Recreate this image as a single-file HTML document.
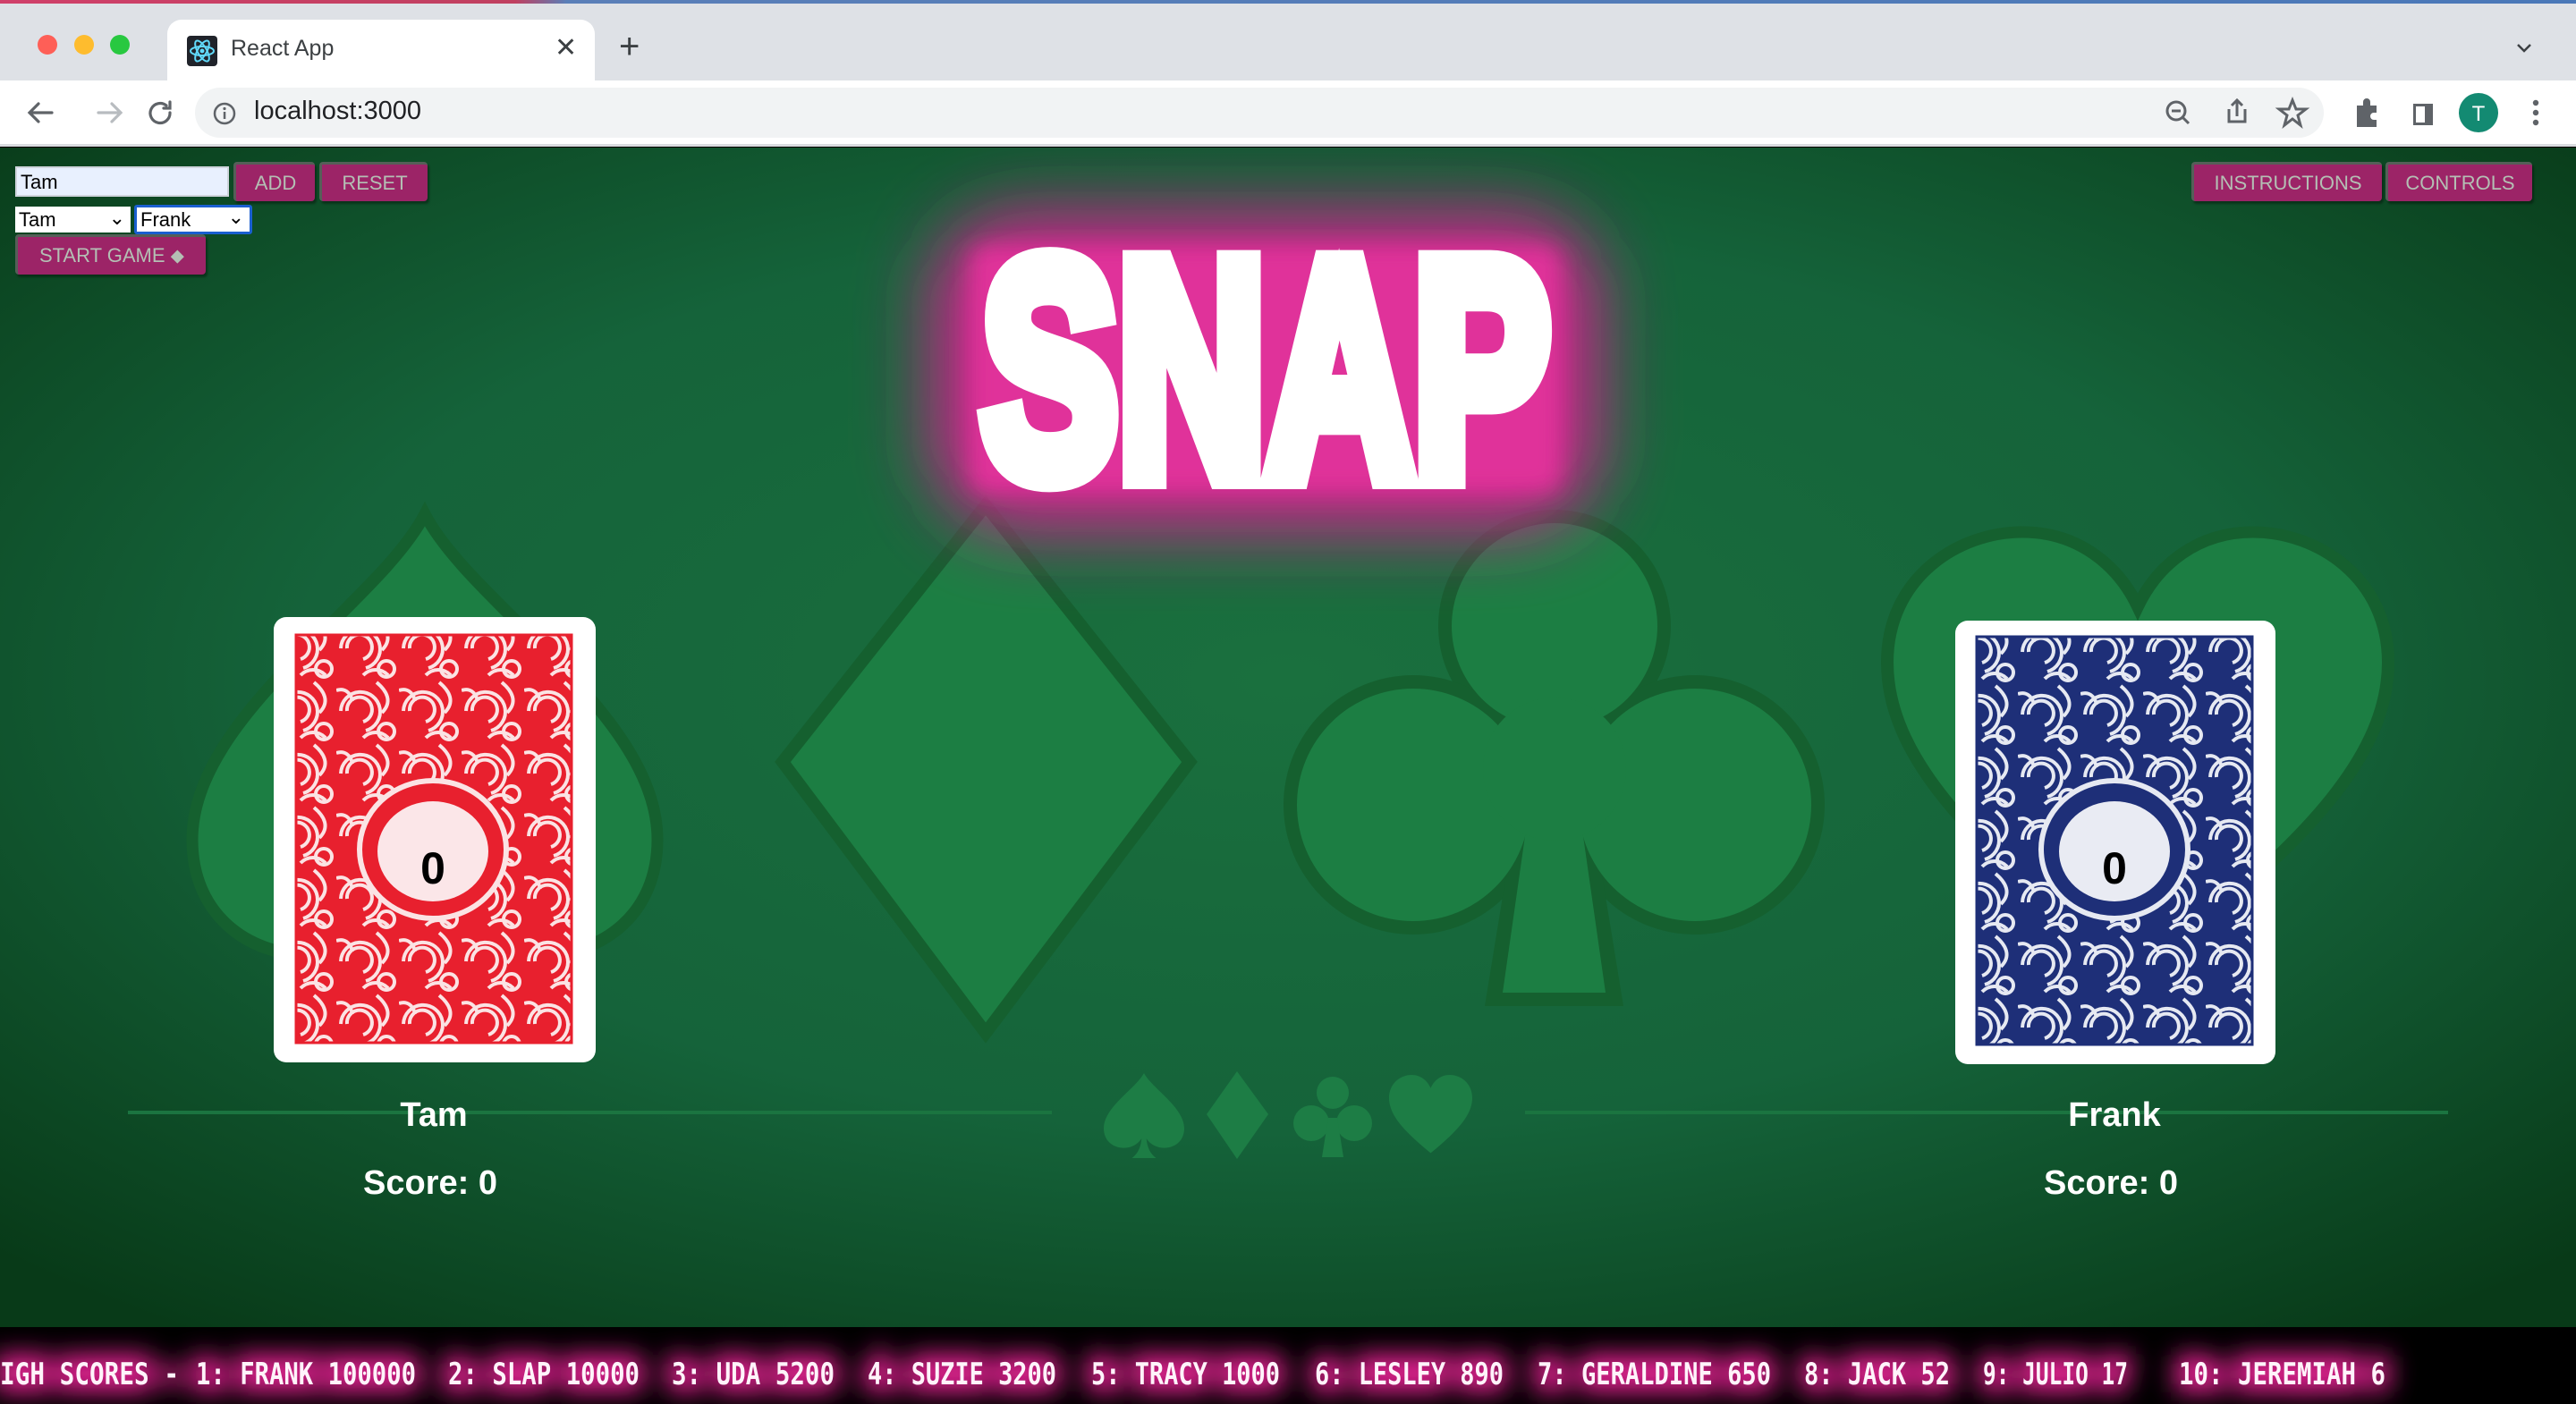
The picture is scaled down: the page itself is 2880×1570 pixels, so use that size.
<!DOCTYPE html>
<html><head><meta charset="utf-8"><style>
*{margin:0;padding:0;box-sizing:border-box}
html,body{width:2880px;height:1570px;overflow:hidden;background:#000;font-family:"Liberation Sans",sans-serif}
.abs{position:absolute}
.btn{position:absolute;background:#9c2467;color:#b4bfb4;font-size:22px;display:flex;align-items:center;justify-content:center;border-top:3px solid #555f58;border-left:3px solid #555f58;border-radius:4px;box-shadow:2px 3px 2px rgba(0,0,0,.35)}
.lbl{position:absolute;color:#fff;font-weight:bold;text-align:center;width:400px}
</style></head><body>
<!-- tab bar -->
<div class="abs" style="left:0;top:0;width:2880px;height:90px;background:#dee1e6"></div>
<div class="abs" style="left:0;top:0;width:2880px;height:4px;background:linear-gradient(90deg,#d0406a 0%,#c04060 20%,#5a7fb8 22%,#4a78b8 100%)"></div>
<div class="abs" style="left:42px;top:39px;width:22px;height:22px;border-radius:50%;background:#fe5f57"></div>
<div class="abs" style="left:83px;top:39px;width:22px;height:22px;border-radius:50%;background:#febc2e"></div>
<div class="abs" style="left:123px;top:39px;width:22px;height:22px;border-radius:50%;background:#28c840"></div>
<div class="abs" style="left:187px;top:22px;width:478px;height:70px;background:#fff;border-radius:16px 16px 0 0"></div>
<svg class="abs" style="left:209px;top:40px" width="34" height="34" viewBox="0 0 34 34"><rect width="34" height="34" rx="4" fill="#20232a"/><g fill="none" stroke="#61dafb" stroke-width="2"><ellipse cx="17" cy="17" rx="13" ry="5"/><ellipse cx="17" cy="17" rx="13" ry="5" transform="rotate(60 17 17)"/><ellipse cx="17" cy="17" rx="13" ry="5" transform="rotate(120 17 17)"/></g><circle cx="17" cy="17" r="2.5" fill="#61dafb"/></svg>
<div class="abs" style="left:258px;top:40px;font-size:25px;color:#3c4043">React App</div>
<div class="abs" style="left:620px;top:36px;font-size:30px;color:#3c4043">✕</div>
<div class="abs" style="left:692px;top:30px;font-size:40px;color:#3c4043">+</div>
<svg class="abs" style="left:2812px;top:46px" width="20" height="16"><path d="M3 4l7 7 7-7" fill="none" stroke="#3c4043" stroke-width="2.5"/></svg>
<!-- toolbar -->
<div class="abs" style="left:0;top:90px;width:2880px;height:74px;background:#fff;border-bottom:3px solid #dadce0"></div>
<svg class="abs" style="left:28px;top:108px" width="180" height="40" viewBox="0 0 180 40"><g fill="none" stroke-width="3.2" stroke-linecap="round"><path d="M30 18H6M15 8L5 18l10 10" stroke="#5f6368"/><path d="M82 18h24M97 8l10 10-10 10" stroke="#b8bcc0"/><path d="M158 10a11 11 0 1 0 4 8" stroke="#5f6368"/><path d="M162 6v7h-7" stroke="#5f6368"/></g></svg>
<div class="abs" style="left:218px;top:98px;width:2380px;height:56px;background:#f1f3f4;border-radius:28px"></div>
<svg class="abs" style="left:236px;top:112px" width="30" height="30"><circle cx="15" cy="15" r="11" fill="none" stroke="#5f6368" stroke-width="2.5"/><rect x="13.8" y="13" width="2.5" height="8" fill="#5f6368"/><circle cx="15" cy="9.5" r="1.6" fill="#5f6368"/></svg>
<div class="abs" style="left:284px;top:108px;font-size:29px;color:#202124">localhost:3000</div>
<svg class="abs" style="left:2415px;top:104px" width="440" height="46" viewBox="0 0 440 46"><g fill="none" stroke="#5f6368" stroke-width="3"><circle cx="18" cy="20" r="10"/><path d="M25 27l7 7M13 20h10"/><path d="M77 18v14h18V18M86 26V8M80 14l6-6 6 6"/><path d="M148 8l4 10h11l-9 7 3 11-9-7-9 7 3-11-9-7h11z"/></g><path d="M220 14h7v-4a4 4 0 0 1 8 0v4h7v8h-3a4 4 0 0 0 0 8h3v8h-22z" fill="#5f6368"/><rect x="283" y="12" width="22" height="24" fill="#5f6368"/><rect x="286" y="15" width="10" height="18" fill="#fff"/><circle cx="356" cy="22" r="22" fill="#138a72"/><text x="356" y="31" font-size="24" fill="#fff" text-anchor="middle" font-family="Liberation Sans">T</text><g fill="#5f6368"><circle cx="420" cy="11" r="3.2"/><circle cx="420" cy="22" r="3.2"/><circle cx="420" cy="33" r="3.2"/></g></svg>
<!-- content bg -->
<svg class="abs" style="left:0;top:165px" width="2880" height="1320" viewBox="0 165 2880 1320">
<defs>
<radialGradient id="bg" cx="0.5" cy="0.45" r="0.7"><stop offset="0" stop-color="#1a703e"/><stop offset="0.55" stop-color="#15633a"/><stop offset="1" stop-color="#083a18"/></radialGradient>
<filter id="gl" x="-40%" y="-60%" width="180%" height="220%"><feGaussianBlur stdDeviation="40"/></filter>
<filter id="gl2" x="-20%" y="-30%" width="140%" height="160%"><feGaussianBlur stdDeviation="12"/></filter>
</defs>
<rect x="0" y="165" width="2880" height="1320" fill="url(#bg)"/>
<g fill="#1c7e43" stroke="#15602f" stroke-width="14">
<path transform="translate(215,575) scale(5.2,5.6)" d="M50 0C40 18 0 40 0 65C0 80 12 88 25 88C35 88 43 83 47 77C46 88 42 95 35 100L65 100C58 95 54 88 53 77C57 83 65 88 75 88C88 88 100 80 100 65C100 40 60 18 50 0Z" stroke-width="2.5"/>
<path d="M1102 565L1330 852L1102 1155L875 852Z"/>
<g stroke-width="0"><circle cx="1738" cy="700" r="130" fill="#15602f"/><circle cx="1580" cy="900" r="145" fill="#15602f"/><circle cx="1895" cy="900" r="145" fill="#15602f"/><path d="M1700 880L1660 1125H1815L1775 880Z" fill="#15602f"/>
<circle cx="1738" cy="700" r="115"/><circle cx="1580" cy="900" r="130"/><circle cx="1895" cy="900" r="130"/><path d="M1710 900L1680 1110H1795L1765 900Z"/><circle cx="1738" cy="860" r="80"/></g>
<path transform="translate(2110,595) scale(5.6,5.2)" d="M50 95C20 70 0 50 0 28C0 10 14 0 27 0C38 0 46 7 50 16C54 7 62 0 73 0C86 0 100 10 100 28C100 50 80 70 50 95Z" stroke-width="2.5"/>
</g>
<g fill="#1d7d45">
<path transform="translate(1234,1200) scale(0.9,0.95)" d="M50 0C40 18 0 40 0 65C0 80 12 88 25 88C35 88 43 83 47 77C46 88 42 95 35 100L65 100C58 95 54 88 53 77C57 83 65 88 75 88C88 88 100 80 100 65C100 40 60 18 50 0Z"/>
<path d="M1383 1198L1418 1246L1383 1296L1349 1246Z"/>
<circle cx="1490" cy="1222" r="18"/><circle cx="1466" cy="1256" r="20"/><circle cx="1514" cy="1256" r="20"/><path d="M1485 1250L1478 1294H1502L1495 1250Z"/>
<path transform="translate(1553,1202) scale(0.93,0.92)" d="M50 95C20 70 0 50 0 28C0 10 14 0 27 0C38 0 46 7 50 16C54 7 62 0 73 0C86 0 100 10 100 28C100 50 80 70 50 95Z"/>
</g>
<path d="M143 1244H1176M1705 1244H2737" stroke="#1b7440" stroke-width="4"/>
<!-- SNAP -->
<rect x="1040" y="235" width="750" height="360" rx="100" fill="#c8268a" filter="url(#gl)"/>
<rect x="1085" y="275" width="660" height="275" rx="20" fill="#e0309a" filter="url(#gl2)"/>
<text x="1097" y="532" font-family="Liberation Sans" font-weight="bold" font-size="345" textLength="636" lengthAdjust="spacingAndGlyphs" fill="#fff" stroke="#fff" stroke-width="30" stroke-linejoin="miter">SNAP</text>
</svg>
<!-- controls -->
<div class="abs" style="left:17px;top:186px;width:239px;height:34px;background:#e8f0fe;border:2px solid #cfd4dc;font-size:22px;padding:3px 4px;color:#000">Tam</div>
<div class="btn" style="left:261px;top:181px;width:91px;height:44px">ADD</div>
<div class="btn" style="left:357px;top:181px;width:121px;height:44px">RESET</div>
<div class="abs" style="left:17px;top:231px;width:129px;height:29px;background:#fff;font-size:22px;padding:2px 4px">Tam<span style="position:absolute;right:6px;top:0">⌄</span></div>
<div class="abs" style="left:150px;top:229px;width:132px;height:33px;background:#fff;border:3px solid #1a5fd0;border-radius:3px;font-size:22px;padding:1px 4px">Frank<span style="position:absolute;right:6px;top:-2px">⌄</span></div>
<div class="btn" style="left:17px;top:262px;width:213px;height:45px">START GAME ⬥</div>
<div class="btn" style="left:2450px;top:181px;width:213px;height:44px">INSTRUCTIONS</div>
<div class="btn" style="left:2667px;top:181px;width:164px;height:44px">CONTROLS</div>
<!-- cards -->
<svg class="abs" style="left:306px;top:690px" width="360" height="498" viewBox="0 0 360 498">
<defs><pattern id="pr" width="70" height="70" patternUnits="userSpaceOnUse"><rect width="70" height="70" fill="#e8202e"/><g fill="none" stroke="#fbe3e4" stroke-width="4"><path d="M5 35a22 22 0 1 1 28 22"/><path d="M12 35a14 14 0 1 1 18 12"/><path d="M45 3c12 10 18 22 6 34"/><circle cx="56" cy="58" r="9"/><path d="M0 12c9-3 16 2 18 12"/><path d="M30 65c8-8 20-8 28 0"/></g></pattern></defs>
<rect width="360" height="498" rx="14" fill="#fff"/>
<rect x="25" y="20" width="308" height="456" fill="url(#pr)" stroke="#e8202e" stroke-width="3"/>
<ellipse cx="178" cy="260" rx="82" ry="77" fill="#e8202e" stroke="#fbe3e4" stroke-width="6"/>
<ellipse cx="178" cy="262" rx="62" ry="56" fill="#fbe6e8"/>
<text x="178" y="298" font-family="Liberation Sans" font-weight="bold" font-size="50" text-anchor="middle">0</text>
</svg>
<svg class="abs" style="left:2186px;top:694px" width="358" height="496" viewBox="0 0 358 496">
<defs><pattern id="pb" width="70" height="70" patternUnits="userSpaceOnUse"><rect width="70" height="70" fill="#1e2f78"/><g fill="none" stroke="#e6e9f2" stroke-width="4"><path d="M5 35a22 22 0 1 1 28 22"/><path d="M12 35a14 14 0 1 1 18 12"/><path d="M45 3c12 10 18 22 6 34"/><circle cx="56" cy="58" r="9"/><path d="M0 12c9-3 16 2 18 12"/><path d="M30 65c8-8 20-8 28 0"/></g></pattern></defs>
<rect width="358" height="496" rx="14" fill="#fff"/>
<rect x="24" y="18" width="308" height="456" fill="url(#pb)" stroke="#1e2f78" stroke-width="3"/>
<ellipse cx="178" cy="256" rx="82" ry="77" fill="#1e2f78" stroke="#e6e9f2" stroke-width="6"/>
<ellipse cx="178" cy="258" rx="62" ry="56" fill="#e9ebf3"/>
<text x="178" y="294" font-family="Liberation Sans" font-weight="bold" font-size="50" text-anchor="middle">0</text>
</svg>
<div class="lbl" style="left:285px;top:1226px;font-size:38px">Tam</div>
<div class="lbl" style="left:281px;top:1302px;font-size:38px">Score: 0</div>
<div class="lbl" style="left:2164px;top:1226px;font-size:38px">Frank</div>
<div class="lbl" style="left:2160px;top:1302px;font-size:38px">Score: 0</div>
<!-- high score bar -->
<svg class="abs" style="left:0;top:1484px" width="2880" height="86" viewBox="0 1484 2880 86">
<defs><filter id="g2" x="-10%" y="-100%" width="120%" height="300%"><feGaussianBlur stdDeviation="14"/></filter></defs>
<rect x="0" y="1484" width="2880" height="86" fill="#000"/>
<g font-family="DejaVu Sans Mono" font-weight="bold" font-size="34" lengthAdjust="spacingAndGlyphs">
<g fill="#e0208f" filter="url(#g2)" stroke="#e0208f" stroke-width="18">
<text x="0" y="1548" textLength="200" lengthAdjust="spacingAndGlyphs">IGH SCORES -</text>
<text x="219" y="1548" textLength="246" lengthAdjust="spacingAndGlyphs">1: FRANK 100000</text>
<text x="501" y="1548" textLength="214" lengthAdjust="spacingAndGlyphs">2: SLAP 10000</text>
<text x="751" y="1548" textLength="182" lengthAdjust="spacingAndGlyphs">3: UDA 5200</text>
<text x="970" y="1548" textLength="211" lengthAdjust="spacingAndGlyphs">4: SUZIE 3200</text>
<text x="1220" y="1548" textLength="211" lengthAdjust="spacingAndGlyphs">5: TRACY 1000</text>
<text x="1470" y="1548" textLength="211" lengthAdjust="spacingAndGlyphs">6: LESLEY 890</text>
<text x="1719" y="1548" textLength="261" lengthAdjust="spacingAndGlyphs">7: GERALDINE 650</text>
<text x="2017" y="1548" textLength="163" lengthAdjust="spacingAndGlyphs">8: JACK 52</text>
<text x="2217" y="1548" textLength="162" lengthAdjust="spacingAndGlyphs">9: JULIO 17</text>
<text x="2436" y="1548" textLength="231" lengthAdjust="spacingAndGlyphs">10: JEREMIAH 6</text>
</g>
<g fill="#fff3fa">
<text x="0" y="1548" textLength="200" lengthAdjust="spacingAndGlyphs">IGH SCORES -</text>
<text x="219" y="1548" textLength="246" lengthAdjust="spacingAndGlyphs">1: FRANK 100000</text>
<text x="501" y="1548" textLength="214" lengthAdjust="spacingAndGlyphs">2: SLAP 10000</text>
<text x="751" y="1548" textLength="182" lengthAdjust="spacingAndGlyphs">3: UDA 5200</text>
<text x="970" y="1548" textLength="211" lengthAdjust="spacingAndGlyphs">4: SUZIE 3200</text>
<text x="1220" y="1548" textLength="211" lengthAdjust="spacingAndGlyphs">5: TRACY 1000</text>
<text x="1470" y="1548" textLength="211" lengthAdjust="spacingAndGlyphs">6: LESLEY 890</text>
<text x="1719" y="1548" textLength="261" lengthAdjust="spacingAndGlyphs">7: GERALDINE 650</text>
<text x="2017" y="1548" textLength="163" lengthAdjust="spacingAndGlyphs">8: JACK 52</text>
<text x="2217" y="1548" textLength="162" lengthAdjust="spacingAndGlyphs">9: JULIO 17</text>
<text x="2436" y="1548" textLength="231" lengthAdjust="spacingAndGlyphs">10: JEREMIAH 6</text>
</g></g>
</svg>
</body></html>
